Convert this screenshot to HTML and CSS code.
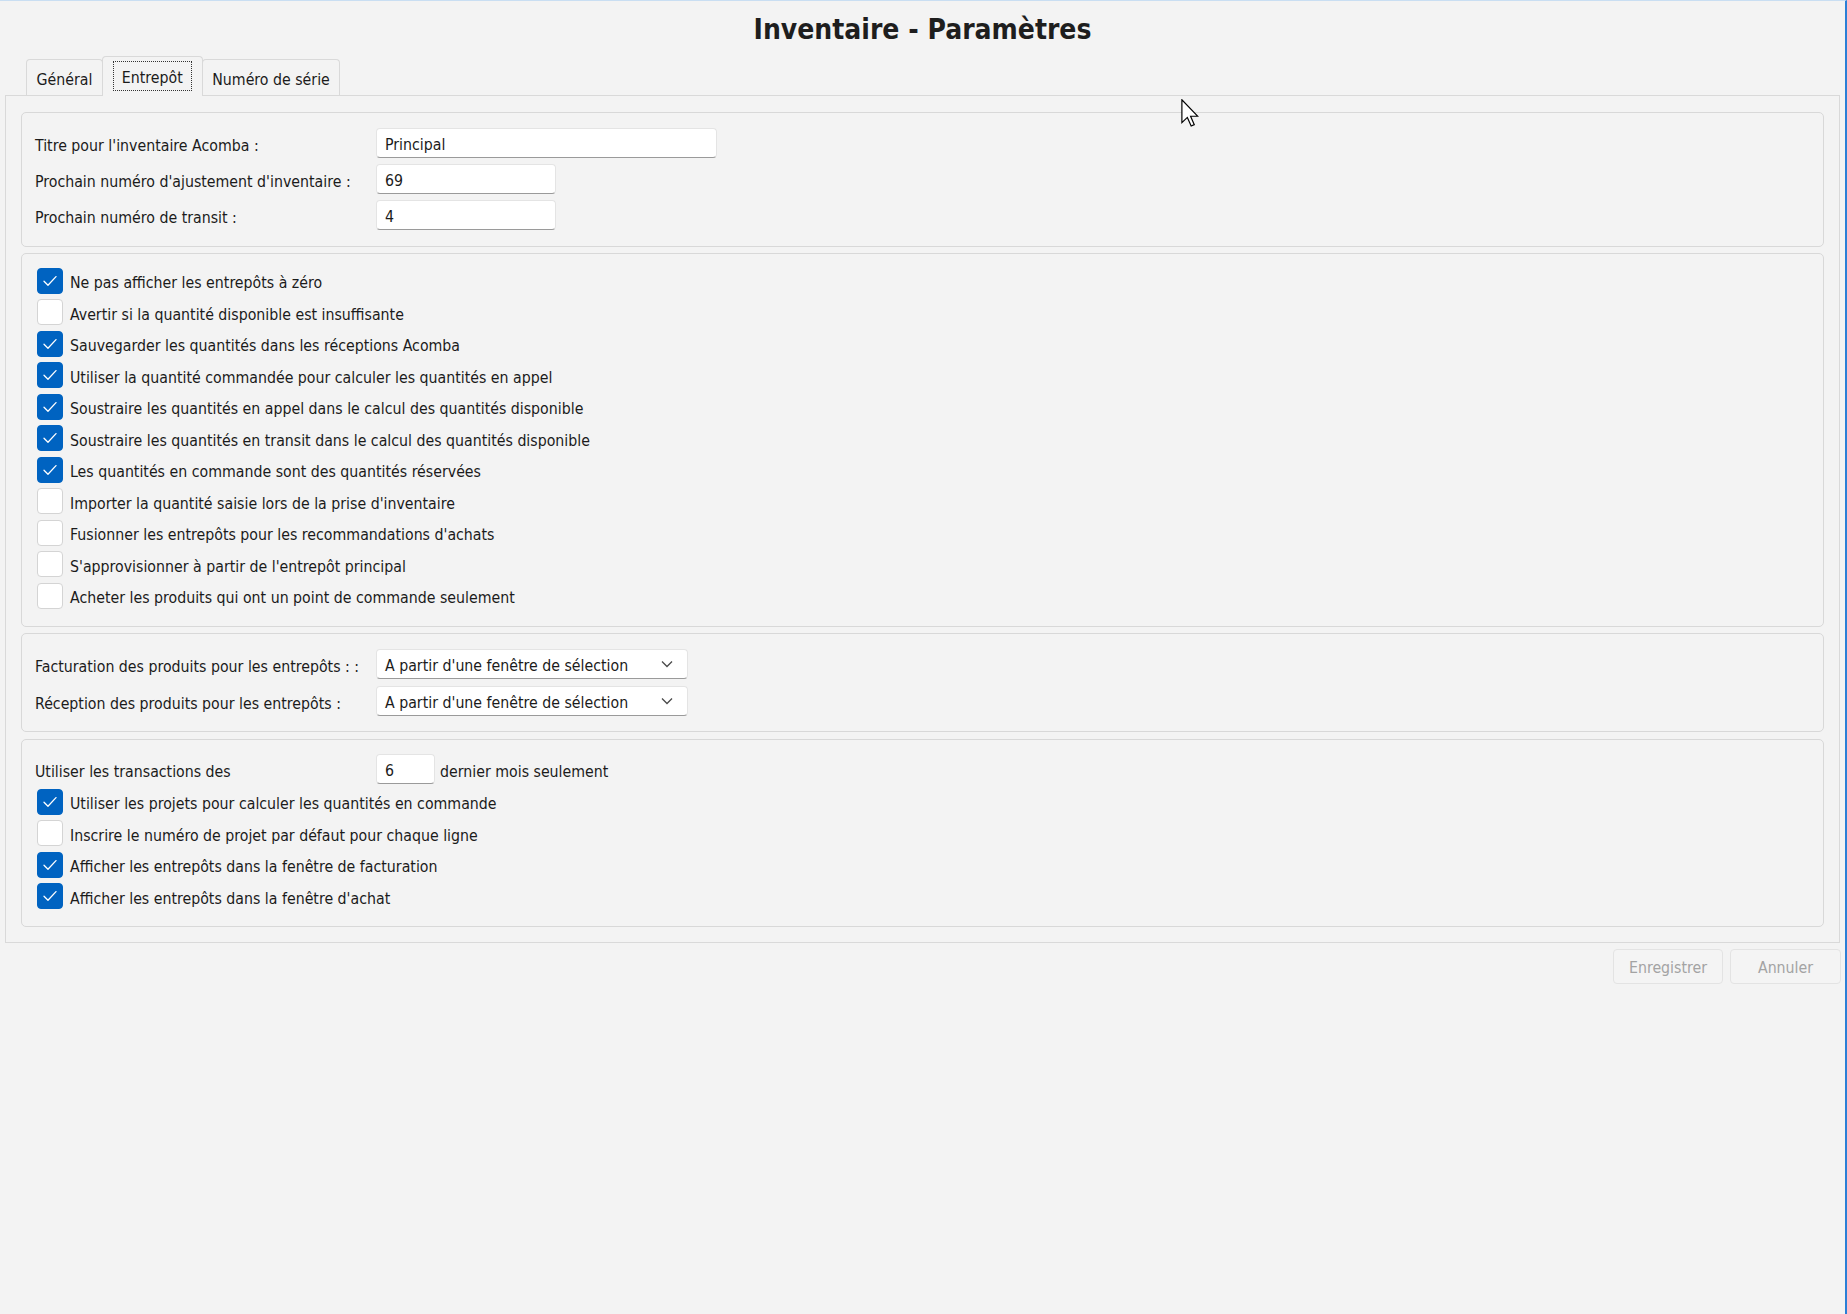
FILE: index.html
```html
<!DOCTYPE html>
<html lang="fr">
<head>
<meta charset="utf-8">
<title>Inventaire - Paramètres</title>
<link rel="stylesheet" href="styles.css">
</head>
<body>
<div class="window">
  <h1 class="title">Inventaire - Paramètres</h1>

  <div class="tabs">
    <div class="tab">Général</div>
    <div class="tab active"><span class="focus">Entrepôt</span></div>
    <div class="tab">Numéro de série</div>
  </div>

  <div class="panel">
    <section class="group g1">
      <span class="lbl">Titre pour l'inventaire Acomba :</span>
      <div class="field w-long">Principal</div>
      <span class="lbl">Prochain numéro d'ajustement d'inventaire :</span>
      <div class="field w-mid">69</div>
      <span class="lbl">Prochain numéro de transit :</span>
      <div class="field w-mid">4</div>
    </section>

    <section class="group g2">
      <div class="check"><span class="cb on"><svg viewBox="0 0 26 26"><polyline points="6.5,13.2 10.8,17.6 19.5,8.2"/></svg></span><span class="txt">Ne pas afficher les entrepôts à zéro</span></div>
      <div class="check"><span class="cb"></span><span class="txt">Avertir si la quantité disponible est insuffisante</span></div>
      <div class="check"><span class="cb on"><svg viewBox="0 0 26 26"><polyline points="6.5,13.2 10.8,17.6 19.5,8.2"/></svg></span><span class="txt">Sauvegarder les quantités dans les réceptions Acomba</span></div>
      <div class="check"><span class="cb on"><svg viewBox="0 0 26 26"><polyline points="6.5,13.2 10.8,17.6 19.5,8.2"/></svg></span><span class="txt">Utiliser la quantité commandée pour calculer les quantités en appel</span></div>
      <div class="check"><span class="cb on"><svg viewBox="0 0 26 26"><polyline points="6.5,13.2 10.8,17.6 19.5,8.2"/></svg></span><span class="txt">Soustraire les quantités en appel dans le calcul des quantités disponible</span></div>
      <div class="check"><span class="cb on"><svg viewBox="0 0 26 26"><polyline points="6.5,13.2 10.8,17.6 19.5,8.2"/></svg></span><span class="txt">Soustraire les quantités en transit dans le calcul des quantités disponible</span></div>
      <div class="check"><span class="cb on"><svg viewBox="0 0 26 26"><polyline points="6.5,13.2 10.8,17.6 19.5,8.2"/></svg></span><span class="txt">Les quantités en commande sont des quantités réservées</span></div>
      <div class="check"><span class="cb"></span><span class="txt">Importer la quantité saisie lors de la prise d'inventaire</span></div>
      <div class="check"><span class="cb"></span><span class="txt">Fusionner les entrepôts pour les recommandations d'achats</span></div>
      <div class="check"><span class="cb"></span><span class="txt">S'approvisionner à partir de l'entrepôt principal</span></div>
      <div class="check"><span class="cb"></span><span class="txt">Acheter les produits qui ont un point de commande seulement</span></div>
    </section>

    <section class="group g3">
      <span class="lbl">Facturation des produits pour les entrepôts : :</span>
      <div class="field select"><span>A partir d'une fenêtre de sélection</span><svg class="chev" viewBox="0 0 12 8"><polyline points="1,1.5 6,6.5 11,1.5"/></svg></div>
      <span class="lbl">Réception des produits pour les entrepôts :</span>
      <div class="field select"><span>A partir d'une fenêtre de sélection</span><svg class="chev" viewBox="0 0 12 8"><polyline points="1,1.5 6,6.5 11,1.5"/></svg></div>
    </section>

    <section class="group g4">
      <div class="months">
        <span class="lbl">Utiliser les transactions des</span>
        <div class="field w-short">6</div>
        <span class="txt after">dernier mois seulement</span>
      </div>
      <div class="check"><span class="cb on"><svg viewBox="0 0 26 26"><polyline points="6.5,13.2 10.8,17.6 19.5,8.2"/></svg></span><span class="txt">Utiliser les projets pour calculer les quantités en commande</span></div>
      <div class="check"><span class="cb"></span><span class="txt">Inscrire le numéro de projet par défaut pour chaque ligne</span></div>
      <div class="check"><span class="cb on"><svg viewBox="0 0 26 26"><polyline points="6.5,13.2 10.8,17.6 19.5,8.2"/></svg></span><span class="txt">Afficher les entrepôts dans la fenêtre de facturation</span></div>
      <div class="check"><span class="cb on"><svg viewBox="0 0 26 26"><polyline points="6.5,13.2 10.8,17.6 19.5,8.2"/></svg></span><span class="txt">Afficher les entrepôts dans la fenêtre d'achat</span></div>
    </section>
  </div>

  <div class="actions">
    <button class="btn b-save" type="button">Enregistrer</button>
    <button class="btn b-cancel" type="button">Annuler</button>
  </div>

  <svg class="cursor" viewBox="0 0 12 19"><path d="M0.5,0.5 L0.5,16 L4.2,12.5 L6.8,18.3 L8.9,17.4 L6.4,11.7 L11.3,11.7 Z"/></svg>
</div>
</body>
</html>
```

FILE: styles.css
```css
* { box-sizing: border-box; }
html, body { margin: 0; padding: 0; }
body {
  background: #f3f3f3;
  font-family: "DejaVu Sans Condensed", "DejaVu Sans", sans-serif;
  font-size: 15.75px;
  color: #1b1b1b;
}
.window {
  position: relative;
  width: 1847px;
  height: 1314px;
  border-top: 1px solid #c9def2;
  border-right: 2px solid #2b7fd6;
  padding-left: 5px;
  overflow: hidden;
}
.title {
  margin: 0 0 0 -5px;
  padding-top: 13px;
  height: 44px;
  line-height: 31px;
  font-size: 28px;
  font-weight: bold;
  text-align: center;
  color: #1e1e1e;
}
.tabs {
  margin-top: 11px;
  height: 39px;
  display: flex;
  align-items: flex-end;
  padding-left: 21px;
}
.tab {
  height: 36px;
  padding: 10px 9.5px 0;
  line-height: 20px;
  border: 1px solid #d9d9d9;
  border-bottom: none;
  border-radius: 4px 4px 0 0;
  margin-right: -1px;
  background: #f3f3f3;
  white-space: nowrap;
}
.tab.active {
  height: 40px;
  margin-bottom: -1px;
  position: relative;
  z-index: 1;
  padding: 4px 10px 0;
}
.focus {
  display: block;
  border: 1px dotted #333;
  height: 30px;
  line-height: 24px;
  padding: 4px 8px 0;
}
.panel {
  margin-right: 5px;
  border: 1px solid #d9d9d9;
  padding: 16px 15px 15px;
  display: flex;
  flex-direction: column;
  gap: 6px;
}
.group {
  border: 1px solid #d8d8d8;
  border-radius: 5px;
  padding-left: 13px;
}
.g1 {
  height: 135px;
  padding-top: 15px;
  display: grid;
  grid-template-columns: 341px auto;
  grid-auto-rows: 30px;
  row-gap: 6px;
  align-items: center;
  justify-items: start;
}
.g2 {
  height: 374px;
  padding-top: 11px;
  padding-left: 15px;
}
.g3 {
  height: 99px;
  padding-top: 15px;
  display: grid;
  grid-template-columns: 341px auto;
  grid-auto-rows: 30px;
  row-gap: 7px;
  align-items: center;
  justify-items: start;
}
.g4 {
  height: 188px;
  margin-top: 1px;
  padding-top: 14px;
  padding-left: 15px;
}
.lbl { white-space: nowrap; padding-top: 4px; }
.txt { white-space: nowrap; padding-top: 4px; }
.field {
  height: 30px;
  line-height: 24px;
  background: #fff;
  border: 1px solid #e4e4e4;
  border-bottom-color: #9a9a9a;
  border-radius: 4px;
  padding: 4px 0 0 8px;
}
.w-long { width: 341px; }
.w-mid { width: 180px; }
.w-short { width: 59px; }
.select {
  width: 312px;
  display: flex;
  align-items: center;
  justify-content: space-between;
  padding-right: 14px;
}
.chev { width: 12px; height: 8px; margin-top: -4px; }
.chev polyline { fill: none; stroke: #4a4a4a; stroke-width: 1.3; }
.check {
  height: 31.5px;
  display: flex;
  align-items: center;
}
.cb {
  flex: none;
  width: 26px;
  height: 26px;
  margin-right: 7px;
  border-radius: 4px;
  background: #fff;
  border: 1px solid #d4d4d4;
}
.cb.on { background: #0063c1; border-color: #0063c1; }
.cb svg { display: block; width: 24px; height: 24px; }
.cb polyline { fill: none; stroke: #fff; stroke-width: 1.4; stroke-linecap: round; stroke-linejoin: round; }
.months {
  display: flex;
  align-items: center;
  height: 30px;
  margin-left: -2px;
  margin-bottom: 2px;
}
.months .lbl { width: 341px; }
.after { margin-left: 5px; }
.actions {
  display: flex;
  justify-content: flex-end;
  gap: 7px;
  margin-top: 6px;
  padding-right: 4px;
}
.btn {
  height: 35px;
  border: 1px solid #e3e3e3;
  border-radius: 4px;
  background: #f4f4f4;
  color: #a3a3a3;
  font: inherit;
  padding: 2px 0 0;
}
.b-save { width: 110px; }
.b-cancel { width: 111px; }
.cursor {
  position: absolute;
  left: 1181px;
  top: 98px;
  width: 18px;
  height: 28px;
}
.cursor path { fill: #fff; stroke: #000; stroke-width: 0.8; stroke-linejoin: miter; }
```
